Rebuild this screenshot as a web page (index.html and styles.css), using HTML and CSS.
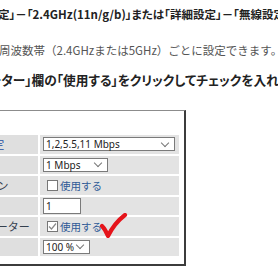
FILE: index.html
```html
<!DOCTYPE html>
<html lang="ja">

<head>
    <meta charset="UTF-8">
    <meta name="viewport" content="width=device-width, initial-scale=1.0">
    <link rel="stylesheet" href="styles.css">
    <title>プライバシーセパレーター設定</title>
</head>

<body>

    <div class="article">
        <p class="step lead">定」－「2.4GHz(11n/g/b)」または「詳細設定」－「無線設定」</p>
        <p class="note">周波数帯（2.4GHzまたは5GHz）ごとに設定できます。</p>
        <p class="step next">ーター」欄の「使用する」をクリックしてチェックを入れます。</p>

        <div class="shot">
            <div class="settings">
                <div class="label link tight">ベーシックレート設定</div>
                <div class="value">
                    <div class="select wide">1,2,5.5,11 Mbps<span class="chev"></span></div>
                </div>

                <div class="label">マルチキャスト</div>
                <div class="value">
                    <div class="select rate">1 Mbps<span class="chev"></span></div>
                </div>

                <div class="label">802.11プロテクション</div>
                <div class="value">
                    <span class="check"></span><span class="check-text">使用する</span>
                </div>

                <div class="label">DTIM</div>
                <div class="value">
                    <div class="textbox">1</div>
                </div>

                <div class="label">プライバシーセパレーター</div>
                <div class="value">
                    <span class="check">
                        <svg width="11" height="11" viewBox="0 0 11 11">
                            <path d="M2 5.5 L4.5 8 L9 2.5" fill="none" stroke="#8a8a8a" stroke-width="1.2" />
                        </svg>
                    </span><span class="check-text">使用する</span>
                    <svg class="redmark" width="30" height="28" viewBox="0 0 30 28">
                        <path d="M3 13 C5 15 7 18 9 23 C13 15 18 8 26 2" fill="none" stroke="#e5141b"
                            stroke-width="4.2" stroke-linecap="round" stroke-linejoin="round" />
                    </svg>
                </div>

                <div class="label">送信出力</div>
                <div class="value">
                    <div class="select power">100 %<span class="chev"></span></div>
                </div>
            </div>
        </div>
    </div>

</body>

</html>
```

FILE: styles.css
```css
body {
    margin: 0;
    padding: 0;
    width: 278px;
    height: 278px;
    overflow: hidden;
    background-color: #fff;
    font-family: "Noto Sans CJK JP", "Noto Sans", sans-serif;
    color: #222;
}

.article {
    padding-top: 6px;
    white-space: nowrap;
}

p {
    margin: 0;
    font-size: 11.5px;
    line-height: 16px;
}

.step {
    font-weight: 700;
    color: #222;
    font-feature-settings: "palt";
}

.lead {
    text-indent: -2px;
}

.note {
    margin-top: 20px;
    color: #555;
    text-indent: -1px;
}

.next {
    margin-top: 14px;
    font-size: 12.7px;
    text-indent: -11px;
}

/* screenshot of the router page */
.shot {
    margin-top: 22px;
    margin-left: -110px;
    width: 296px;
    padding: 24px 0 8px 0;
    box-sizing: border-box;
    border-top: 1px solid #8c8c8c;
    border-right: 2px solid #3c3c3c;
    border-bottom: 2px solid #3c3c3c;
}

.settings {
    display: grid;
    grid-template-columns: 148px 139px;
    grid-auto-rows: 18.5px;
    gap: 2px;
}

.label,
.value {
    background-color: #e3e3e3;
    display: flex;
    align-items: center;
    font-size: 11px;
}

.label {
    padding-left: 8px;
    color: #34404e;
    background-color: #dfdfdf;
}

.label.tight {
    letter-spacing: -0.4px;
}

.label.link {
    color: #1f4f9f;
}

.value {
    padding-left: 3px;
    position: relative;
}

.select,
.textbox {
    box-sizing: border-box;
    height: 14px;
    border: 1px solid #7a7a7a;
    background-color: #fff;
    font-family: "Noto Sans", sans-serif;
    font-size: 10px;
    line-height: 12px;
    padding-left: 2px;
    color: #222;
    display: flex;
    align-items: center;
    justify-content: space-between;
}

.select.wide {
    width: 132px;
}

.select.rate {
    width: 65px;
}

.select.power {
    width: 47px;
}

.textbox {
    width: 38px;
    height: 16px;
}

.chev {
    width: 5px;
    height: 5px;
    margin-right: 6px;
    margin-bottom: 3px;
    border-right: 1px solid #777;
    border-bottom: 1px solid #777;
    transform: rotate(45deg);
}

.check {
    box-sizing: border-box;
    width: 11px;
    height: 11px;
    margin-left: 4px;
    border: 1px solid #777;
    background-color: #fff;
    display: flex;
}

.check svg {
    margin: -1px;
}

.check-text {
    margin-left: 2px;
    color: #2f5a96;
    font-size: 10.5px;
}

.redmark {
    position: absolute;
    left: 59px;
    top: -4px;
}
```
